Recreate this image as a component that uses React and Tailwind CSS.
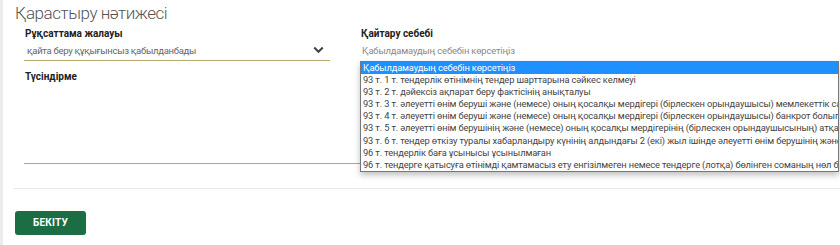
import React from "react";

const options = [
  "Қабылдамаудың себебін көрсетіңіз",
  "93 т. 1 т. тендерлік өтінімнің тендер шарттарына сәйкес келмеуі",
  "93 т. 2 т. дәйексіз ақпарат беру фактісінің анықталуы",
  "93 т. 3 т. әлеуетті өнім беруші және (немесе) оның қосалқы мердігері (бірлескен орындаушысы) мемлекеттік сатып алу саласындағы жосықсыз қатысушылар тізіліміне енгізілген",
  "93 т. 4 т. әлеуетті өнім беруші және (немесе) оның қосалқы мердігері (бірлескен орындаушысы) банкрот болып танылған",
  "93 т. 5 т. әлеуетті өнім берушінің және (немесе) оның қосалқы мердігерінің (бірлескен орындаушысының) атқарушы органы",
  "93 т. 6 т. тендер өткізу туралы хабарландыру күнінің алдындағы 2 (екі) жыл ішінде әлеуетті өнім берушінің және (немесе)",
  "96 т. тендерлік баға ұсынысы ұсынылмаған",
  "96 т. тендерге қатысуға өтінімді қамтамасыз ету енгізілмеген немесе тендерге (лотқа) бөлінген соманың нөл бүтін",
];

export default function App() {
  return (
    <div className="w-[840px] h-[245px] bg-[#ececec] overflow-hidden" style={{ fontFamily: "Roboto, 'Liberation Sans', sans-serif" }}>
      <div className="ml-[3px] h-[245px] bg-white relative">
        <div className="pl-[12px] h-[26px] pt-[1px] text-[17px] font-light text-[#555] leading-[24px] tracking-[-0.45px]">
          Қарастыру нәтижесі
        </div>
        <div className="flex pl-[21px] mt-[2px] gap-[30px]">
          <div className="w-[306px]">
            <div className="text-[10px] font-bold text-[#222] leading-[12px] pl-[1px]">Рұқсаттама жалауы</div>
            <div className="mt-[1px] h-[20px] border-b border-[#b9a76c] flex items-center justify-between pl-[3px] pr-[6px]">
              <span className="text-[9.5px] text-[#666] leading-[12px] tracking-[-0.3px]">қайта беру құқығынсыз қабылданбады</span>
              <svg width="11" height="8" viewBox="0 0 11 8" className="mb-[1px]">
                <path d="M1.2 1.5 L5.5 5.8 L9.8 1.5" fill="none" stroke="#444" strokeWidth="2" />
              </svg>
            </div>
          </div>
          <div className="w-[306px]">
            <div className="text-[10px] font-bold text-[#222] leading-[12px] pl-[1px]">Қайтару себебі</div>
            <div className="mt-[1px] h-[20px] pl-[2px] flex items-center">
              <span className="text-[9.4px] text-[#888] leading-[12px] tracking-[-0.15px]">Қабылдамаудың себебін көрсетіңіз</span>
            </div>
          </div>
        </div>
        <div className="pl-[21px] mt-[10px] w-[357px]">
          <div className="text-[10px] font-bold text-[#222] leading-[12px] pl-[1px]">Түсіндірме</div>
          <div className="h-[81px] border-b border-[#b9a76c]"></div>
        </div>
        <div className="ml-[11px] mt-[24px] border-t border-[#e6e6e6]"></div>
        <div className="pl-[12px] mt-[20px]">
          <button className="w-[71px] h-[24px] rounded-[3px] bg-[#1b6e44] text-white text-[10px] font-bold leading-[24px] tracking-[0.2px]">
            БЕКІТУ
          </button>
        </div>

        <div className="absolute left-[357px] top-[61px] w-[479px] border border-[#777] bg-white shadow-[0_3px_6px_rgba(0,0,0,0.25)] overflow-hidden">
          {options.map((o, i) => (
            <div
              key={i}
              className={
                "h-[12.1px] leading-[12px] text-[9.3px] tracking-[-0.13px] whitespace-nowrap pl-[2px] " +
                (i === 0 ? "bg-[#1e90ff] text-white" : "text-[#444]")
              }
            >
              {o}
            </div>
          ))}
        </div>
      </div>
    </div>
  );
}
